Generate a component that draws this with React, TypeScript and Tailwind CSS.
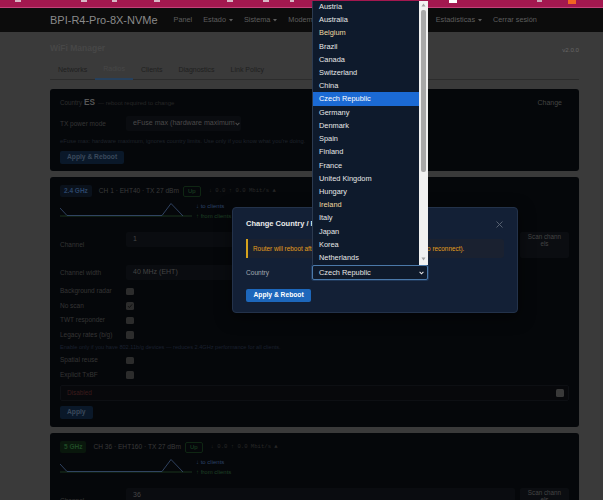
import React from 'react';

const countries = [
  'Austria',
  'Australia',
  'Belgium',
  'Brazil',
  'Canada',
  'Switzerland',
  'China',
  'Czech Republic',
  'Germany',
  'Denmark',
  'Spain',
  'Finland',
  'France',
  'United Kingdom',
  'Hungary',
  'Ireland',
  'Italy',
  'Japan',
  'Korea',
  'Netherlands',
];

const navItems = [
  { name: 'Panel' },
  { name: 'Estado', caret: true },
  { name: 'Sistema', caret: true },
  { name: 'Modem', caret: true },
  { name: 'Red', caret: true },
  { name: 'Servicios', caret: true },
  { name: 'VPN' },
  { name: 'Estadísticas', caret: true },
  { name: 'Cerrar sesión' },
];

const tabs = ['Networks', 'Radios', 'Clients', 'Diagnostics', 'Link Policy'];

function Caret() {
  return (
    <svg width="4" height="3" viewBox="0 0 4 3" className="ml-[3px]">
      <path d="M0 0h4L2 2.5z" fill="currentColor" />
    </svg>
  );
}

function Chevron({ color }: { color: string }) {
  return (
    <svg width="5" height="4" viewBox="0 0 5 4" className="shrink-0">
      <path d="M0.6 0.9L2.5 2.8L4.4 0.9" stroke={color} strokeWidth="1.1" fill="none" />
    </svg>
  );
}

function Checkbox({ on }: { on?: boolean }) {
  return (
    <span className="flex h-[7.5px] w-[7.5px] items-center justify-center rounded-[1.5px] bg-[#2c2c2c]">
      {on && (
        <svg width="6" height="6" viewBox="0 0 6 6">
          <path d="M1 3.1l1.4 1.5L5.1 1.4" stroke="#111" strokeWidth="1" fill="none" />
        </svg>
      )}
    </span>
  );
}

function Label({ children }: { children: React.ReactNode }) {
  return <span className="w-[66px] shrink-0 text-[6.5px] text-[#353535]">{children}</span>;
}

function CheckRow({ label, on }: { label: string; on?: boolean }) {
  return (
    <div className="flex h-[14.5px] items-center">
      <Label>{label}</Label>
      <Checkbox on={on} />
    </div>
  );
}

function Chart() {
  return (
    <div className="flex h-[24px]">
      <svg width="133" height="24" viewBox="0 0 133 24">
        <path d="M0 19H132" stroke="#1d3a1f" strokeWidth="0.9" />
        <path d="M0 11L7 18.5H102L111 6.5L123 19" stroke="#34486a" strokeWidth="0.9" fill="none" />
      </svg>
      <div className="ml-[3px] pt-[5px] text-[6px] leading-[9.5px]">
        <div className="text-[#2c4266]">↓ to clients</div>
        <div className="text-[#1e4125]">↑ from clients</div>
      </div>
    </div>
  );
}

function RadioHead({ band, info, green }: { band: string; info: string; green?: boolean }) {
  return (
    <div className="flex h-[12px] items-center">
      <span
        className={
          green
            ? 'flex h-[12px] items-center rounded-[2px] bg-[#09170c] px-[4px] text-[6.5px] font-bold text-[#1f4a25]'
            : 'flex h-[12px] items-center rounded-[2px] bg-[#0a111b] px-[4px] text-[6.5px] font-bold text-[#2a4569]'
        }
      >
        {band}
      </span>
      <span className="ml-[7px] text-[6.6px] text-[#3a3a3a]">{info}</span>
      <span className="ml-[4px] flex h-[11px] items-center rounded-[2px] border border-[#0f2613] px-[4px] text-[6px] text-[#1d4724]">
        Up
      </span>
      <span className="ml-[8px] font-['Liberation_Mono',monospace] text-[5.6px] text-[#282828]">
        ↓ 0.0 ↑ 0.0 Mbit/s ▲
      </span>
    </div>
  );
}

function ChannelRow({ value }: { value: string }) {
  return (
    <div className="mt-[11px] flex h-[26px] items-center">
      <Label>Channel</Label>
      <div className="flex flex-1 gap-[5px] self-stretch">
        <div className="flex flex-1 flex-col">
          <div className="flex h-[15px] items-center rounded-[2px] bg-[#0a0c10] px-[7px] text-[7px] text-[#454545]">
            {value}
          </div>
        </div>
        <button className="flex w-[49px] items-start justify-center rounded-[2px] bg-[#0b0d11] px-[7px] pt-[0.5px] text-center text-[6.3px] leading-[7px] break-all text-[#444]">
          Scan channels
        </button>
      </div>
    </div>
  );
}

function DimButton({ children }: { children: React.ReactNode }) {
  return (
    <button className="flex h-[13px] items-center rounded-[2px] bg-[#0a1829] px-[7px] text-[6.7px] font-bold text-[#3a495b]">
      {children}
    </button>
  );
}

export default function App() {
  return (
    <div className="relative h-[500px] w-[603px] overflow-hidden bg-[#3a3a3a] font-['Liberation_Sans',Arial,sans-serif]">
      {/* browser chrome sliver */}
      <div className="flex h-[8px] items-start border-b border-[#c4417a] bg-[#a3184f]">
        <span className="ml-[15px] h-[1.5px] w-[6px] bg-[#d8b7c5]" />
        <span className="ml-[60px] h-[1.5px] w-[6px] bg-[#d8b7c5]" />
        <span className="ml-[25px] h-[1.5px] w-[5px] bg-[#d8b7c5]" />
        <span className="ml-[37px] h-[1.5px] w-[6px] bg-[#d8b7c5]" />
        <span className="ml-[67px] h-[1.5px] w-[6px] bg-[#d8b7c5]" />
        <span className="ml-[30px] h-[1.5px] w-[6px] bg-[#d8b7c5]" />
        <span className="ml-[21px] h-[1.5px] w-[4px] bg-[#d8b7c5]" />
        <span className="ml-[155px] h-[3px] w-[8px] bg-white" />
        <span className="ml-[80px] h-[2px] w-[5px] bg-[#c9a9b8]" />
        <span className="ml-[26px] h-[4px] w-[8px] bg-[#f26522]" />
      </div>

      <nav className="flex h-[24px] items-center bg-[#0c0c0c] pl-[50px]">
        <span className="text-[11px] text-[#8a8a8a]">BPI-R4-Pro-8X-NVMe</span>
        <ul className="ml-[16px] flex items-center gap-[11px] text-[7.3px] text-[#5e5e5e]">
          {navItems.map((item) => (
            <li key={item.name} className="flex items-center whitespace-nowrap">
              {item.name}
              {item.caret && <Caret />}
            </li>
          ))}
        </ul>
      </nav>

      <main className="ml-[50px] w-[529px] pt-[10px]">
        <header className="flex h-[13px] items-end justify-between">
          <h1 className="text-[8.5px] font-bold leading-[13px] text-[#474747]">WiFi Manager</h1>
          <span className="mb-[1px] text-[6.2px] leading-[8px] text-[#666]">v2.0.0</span>
        </header>

        <div className="mt-[6px] flex h-[19px] border-b border-[#2c2c2c]">
          {tabs.map((t) => (
            <span
              key={t}
              className={
                t === 'Radios'
                  ? 'mb-[-1px] flex items-center border-b-2 border-[#26405c] px-[8px] text-[7px] text-[#474747]'
                  : 'flex items-center px-[8px] text-[7px] text-[#1f1f1f]'
              }
            >
              {t}
            </span>
          ))}
        </div>

        {/* country card */}
        <section className="mt-[9px] rounded-[3px] bg-[#05070a] px-[10px] pt-[9px] pb-[7px]">
          <div className="flex h-[10px] items-center justify-between">
            <div className="flex items-baseline">
              <span className="text-[6.3px] text-[#2e2e2e]">Country</span>
              <span className="ml-[2px] text-[8.2px] font-bold text-[#575757]">ES</span>
              <span className="ml-[3px] text-[6px] text-[#262626]">— reboot required to change</span>
            </div>
            <span className="mr-[7px] text-[7px] text-[#444]">Change</span>
          </div>
          <div className="mt-[8px] flex items-center">
            <Label>TX power mode</Label>
            <div className="flex h-[15px] w-[115px] items-center rounded-[2px] bg-[#0a0c10] pl-[7px] pr-[1px]">
              <span className="flex-1 overflow-hidden whitespace-nowrap text-[7.1px] text-[#4a4a4a]">
                eFuse max (hardware maximum)
              </span>
              <Chevron color="#4a4a4a" />
            </div>
          </div>
          <p className="mt-[6px] h-[8px] whitespace-nowrap text-[5.8px] leading-[8px] text-[#1f232a]">
            eFuse max: hardware maximum, ignores country limits. Use only if you know what you're doing.
          </p>
          <div className="mt-[6px]">
            <DimButton>Apply &amp; Reboot</DimButton>
          </div>
        </section>

        {/* 2.4 GHz radio */}
        <section className="mt-[6px] rounded-[3px] bg-[#05070a] px-[10px] pt-[8px] pb-[8px]">
          <RadioHead band="2.4 GHz" info="CH 1 · EHT40 · TX 27 dBm" />
          <Chart />
          <ChannelRow value="1" />
          <div className="mt-[7px] flex h-[15px] items-center">
            <Label>Channel width</Label>
            <div className="flex h-[15px] w-[389px] items-center rounded-[2px] bg-[#0a0c10] px-[7px] text-[7px] text-[#444]">
              40 MHz (EHT)
            </div>
          </div>
          <div className="mt-[4px]">
            <CheckRow label="Background radar" />
            <CheckRow label="No scan" on />
            <CheckRow label="TWT responder" />
            <CheckRow label="Legacy rates (b/g)" />
            <p className="h-[11px] whitespace-nowrap text-[5.6px] leading-[11px] text-[#1b2130]">
              Enable only if you have 802.11b/g devices — reduces 2.4GHz performance for all clients.
            </p>
            <CheckRow label="Spatial reuse" />
            <CheckRow label="Explicit TxBF" />
          </div>
          <div className="mt-[3px] flex h-[16px] items-center justify-between rounded-[2px] border border-[#0d0f13] bg-[#07080b] pl-[6px] pr-[4px]">
            <span className="text-[6.4px] text-[#3c1b1b]">Disabled</span>
            <span className="h-[8px] w-[8px] rounded-[1.5px] bg-[#393939]" />
          </div>
          <div className="mt-[5px]">
            <DimButton>Apply</DimButton>
          </div>
        </section>

        {/* 5 GHz radio */}
        <section className="mt-[6px] rounded-[3px] bg-[#05070a] px-[10px] pt-[8px] pb-[8px]">
          <RadioHead band="5 GHz" info="CH 36 · EHT160 · TX 27 dBm" green />
          <Chart />
          <ChannelRow value="36" />
        </section>
      </main>

      {/* modal */}
      <div className="absolute left-[232px] top-[207px] w-[286px] rounded-[4px] border border-[#23324a] bg-[#132036] px-[13px] pt-[11px] pb-[10px] shadow-[0_4px_16px_rgba(0,0,0,0.5)]">
        <div className="flex h-[10px] items-center justify-between">
          <h2 className="text-[7.5px] font-bold text-[#ececec]">Change Country / Region</h2>
          <svg width="7" height="7" viewBox="0 0 7 7" className="mr-[1px]">
            <path d="M0.5 0.5L6.5 6.5M6.5 0.5L0.5 6.5" stroke="#5d6877" strokeWidth="0.9" />
          </svg>
        </div>
        <div className="mt-[10px] flex h-[19px] items-center overflow-hidden whitespace-nowrap rounded-r-[3px] border-l-2 border-[#d6a31d] bg-[#1a2130] pl-[5px] text-[6.4px] text-[#e39e1c]">
          Router will reboot after applying the changes (you may need to reconnect).
        </div>
        <div className="mt-[7px] flex items-center">
          <span className="w-[66px] text-[6.6px] text-[#a2a9b2]">Country</span>
          <div className="relative flex h-[15px] w-[116px] items-center justify-between rounded-[2px] border border-[#4b79a9] bg-[#0f1a2b] pl-[6px] pr-[3px] text-[7.4px] text-[#e6e6e6] shadow-[0_0_0_1px_rgba(59,110,170,0.3)]">
            Czech Republic
            <Chevron color="#e6e6e6" />

            {/* open listbox */}
            <div className="absolute bottom-[14.5px] left-[-1px] flex h-[264px] w-[116px]">
              <div className="flex-1 overflow-hidden border-l border-[#2b3a50] bg-[#0e1a2c]">
                <ul className="mt-[-0.6px]">
                  {countries.map((c) => (
                    <li
                      key={c}
                      className={
                        c === 'Czech Republic'
                          ? 'h-[13.23px] bg-[#1b6ad4] pl-[6px] text-[7.4px] leading-[13.23px] text-white'
                          : c === 'Belgium' || c === 'Ireland'
                            ? 'h-[13.23px] pl-[6px] text-[7.4px] leading-[13.23px] text-[#f0d9a0]'
                            : 'h-[13.23px] pl-[6px] text-[7.4px] leading-[13.23px] text-[#e8e8e8]'
                      }
                    >
                      {c}
                    </li>
                  ))}
                </ul>
              </div>
              <div className="flex w-[9px] flex-col items-center bg-[#f1f1f1]">
                <svg width="5" height="4" viewBox="0 0 5 4" className="mt-[2px]">
                  <path d="M0.5 3.5h4L2.5 0.5z" fill="#a3a3a3" />
                </svg>
                <span className="mt-[3px] h-[162px] w-[5px] rounded-[2px] bg-[#a8a8a8]" />
                <span className="flex-1" />
                <svg width="5" height="4" viewBox="0 0 5 4" className="mb-[4px]">
                  <path d="M0.5 0.5h4L2.5 3.5z" fill="#a3a3a3" />
                </svg>
              </div>
            </div>
          </div>
        </div>
        <button className="mt-[9px] flex h-[13px] items-center rounded-[2px] bg-[#1d67bb] px-[7.5px] text-[6.7px] font-bold text-white">
          Apply &amp; Reboot
        </button>
      </div>
    </div>
  );
}
